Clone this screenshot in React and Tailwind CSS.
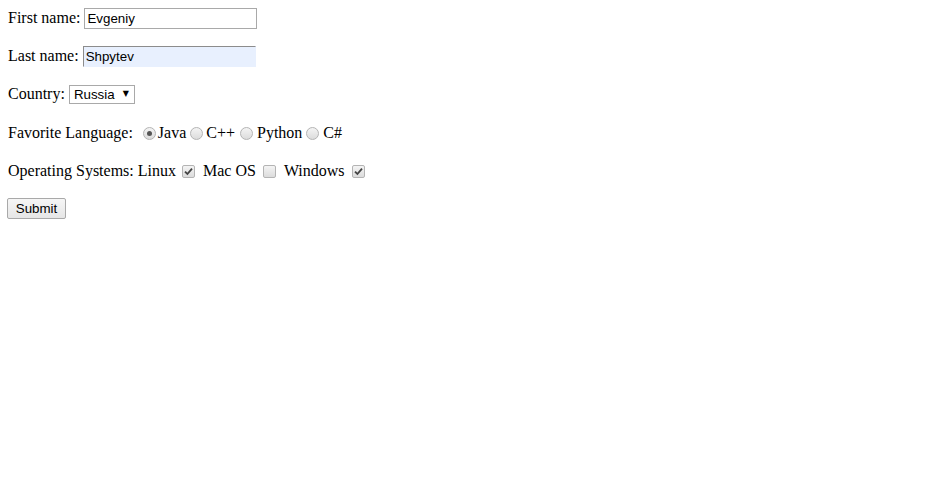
import React, { useState } from "react";

function Radio({ checked, onClick }) {
  return (
    <span
      onClick={onClick}
      className="inline-flex w-[13px] h-[13px] rounded-full border border-[#b4b4b4] bg-gradient-to-b from-[#f4f4f4] to-[#dcdcdc] items-center justify-center cursor-default"
    >
      {checked && <span className="w-[5px] h-[5px] rounded-full bg-[#555]" />}
    </span>
  );
}

function Check({ checked, onClick }) {
  return (
    <span
      onClick={onClick}
      className="inline-flex w-[13px] h-[13px] rounded-[2px] border border-[#b4b4b4] bg-gradient-to-b from-[#f4f4f4] to-[#dcdcdc] items-center justify-center cursor-default"
    >
      {checked && (
        <svg width="9" height="9" viewBox="0 0 9 9">
          <path d="M1 4.6 L3.4 7 L8 1.6" fill="none" stroke="#444" strokeWidth="1.8" />
        </svg>
      )}
    </span>
  );
}

export default function App() {
  const [firstName, setFirstName] = useState("Evgeniy");
  const [lastName, setLastName] = useState("Shpytev");
  const [country, setCountry] = useState("Russia");
  const [lang, setLang] = useState("Java");
  const [os, setOs] = useState({ linux: true, mac: false, windows: true });

  const inputCls =
    "w-[173px] h-[21px] border border-[#a9a9a9] px-[2px] text-[13.33px] text-black outline-none font-['Liberation_Sans',Arial,sans-serif]";

  return (
    <div className="min-h-screen bg-white text-black text-[16px] font-['Liberation_Serif','Times_New_Roman',serif]">
      <form
        className="flex flex-col gap-4 pt-[7px] px-2"
        onSubmit={(e) => e.preventDefault()}
      >
        {/* First name */}
        <div className="flex items-center h-[22px]">
          <span>First name:</span>
          <input
            type="text"
            value={firstName}
            onChange={(e) => setFirstName(e.target.value)}
            className={inputCls + " ml-[4px] bg-white"}
          />
        </div>

        {/* Last name */}
        <div className="flex items-center h-[22px]">
          <span>Last name:</span>
          <input
            type="text"
            value={lastName}
            onChange={(e) => setLastName(e.target.value)}
            className={inputCls + " ml-[4px] bg-[#e8f0fe] border-t-[#8c8c8c] border-l-[#8c8c8c] border-b-[#e8f0fe] border-r-[#e8f0fe]"}
          />
        </div>

        {/* Country */}
        <div className="flex items-center h-[22px]">
          <span>Country:</span>
          <label className="relative ml-[4px] inline-flex">
            <select
              value={country}
              onChange={(e) => setCountry(e.target.value)}
              className="appearance-none w-[66px] h-[19px] border border-[#a9a9a9] bg-white pl-[4px] text-[13.33px] leading-[17px] outline-none font-['Liberation_Sans',Arial,sans-serif]"
            >
              <option>Russia</option>
              <option>USA</option>
              <option>Germany</option>
            </select>
            <span className="absolute right-[6px] top-[5px] text-[8px] leading-none pointer-events-none font-['DejaVu_Sans',sans-serif]">
              ▼
            </span>
          </label>
        </div>

        {/* Favorite language */}
        <div className="flex items-center h-[22px] pt-[2px]">
          <span>Favorite Language:</span>
          <span className="flex ml-[10px] mr-[2px]">
            <Radio checked={lang === "Java"} onClick={() => setLang("Java")} />
          </span>
          <span>Java</span>
          <span className="flex ml-[4px] mr-[3px]">
            <Radio checked={lang === "C++"} onClick={() => setLang("C++")} />
          </span>
          <span>C++</span>
          <span className="flex ml-[5px] mr-[4px]">
            <Radio checked={lang === "Python"} onClick={() => setLang("Python")} />
          </span>
          <span>Python</span>
          <span className="flex ml-[4px] mr-[4px]">
            <Radio checked={lang === "C#"} onClick={() => setLang("C#")} />
          </span>
          <span>C#</span>
        </div>

        {/* Operating systems */}
        <div className="flex items-center h-[22px] pt-[2px]">
          <span>Operating Systems: Linux</span>
          <span className="flex ml-[6px] mr-[8px]">
            <Check checked={os.linux} onClick={() => setOs({ ...os, linux: !os.linux })} />
          </span>
          <span>Mac OS</span>
          <span className="flex ml-[7px] mr-[8px]">
            <Check checked={os.mac} onClick={() => setOs({ ...os, mac: !os.mac })} />
          </span>
          <span>Windows</span>
          <span className="flex ml-[7px]">
            <Check checked={os.windows} onClick={() => setOs({ ...os, windows: !os.windows })} />
          </span>
        </div>

        {/* Submit */}
        <div className="flex items-center h-[22px]">
          <button
            type="submit"
            className="-ml-[1px] w-[59px] h-[21px] border border-[#a9a9a9] rounded-[2px] bg-gradient-to-b from-[#f6f6f6] to-[#e6e6e6] text-[13.33px] text-black font-['Liberation_Sans',Arial,sans-serif]"
          >
            Submit
          </button>
        </div>
      </form>
    </div>
  );
}
